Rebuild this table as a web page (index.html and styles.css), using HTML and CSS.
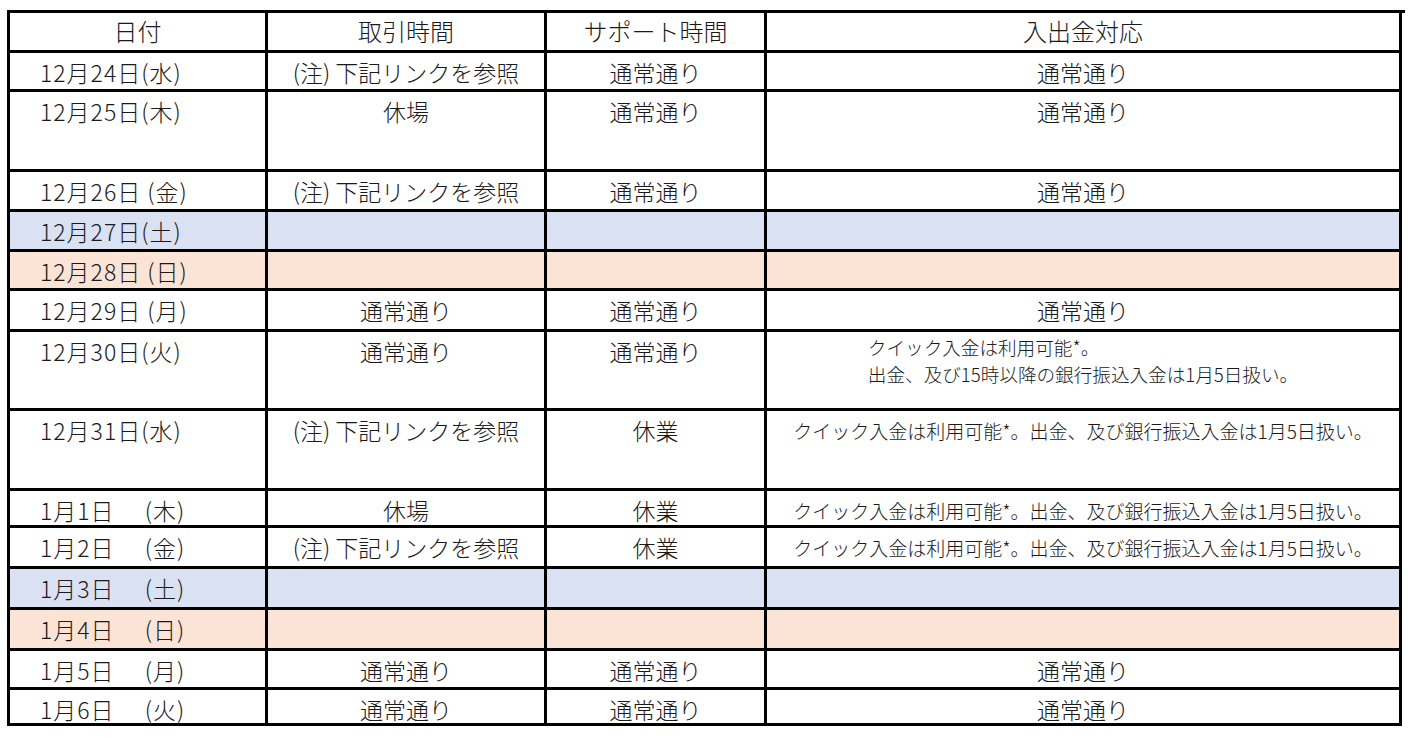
FILE: index.html
```html
<!DOCTYPE html>
<html lang="ja">
<head>
<meta charset="utf-8">
<title>年末年始の営業スケジュール</title>
<link rel="stylesheet" href="styles.css">
</head>
<body>
<div class="sheet">
  <div class="cell head">日付</div>
  <div class="cell head">取引時間</div>
  <div class="cell head">サポート時間</div>
  <div class="cell head">入出金対応</div>

  <div class="cell date">12月24日(水)</div>
  <div class="cell">(注) 下記リンクを参照</div>
  <div class="cell">通常通り</div>
  <div class="cell">通常通り</div>

  <div class="cell date">12月25日(木)</div>
  <div class="cell">休場</div>
  <div class="cell">通常通り</div>
  <div class="cell">通常通り</div>

  <div class="cell date">12月26日 (金)</div>
  <div class="cell">(注) 下記リンクを参照</div>
  <div class="cell">通常通り</div>
  <div class="cell">通常通り</div>

  <div class="cell date sat">12月27日(土)</div>
  <div class="cell sat"></div>
  <div class="cell sat"></div>
  <div class="cell sat"></div>

  <div class="cell date sun">12月28日 (日)</div>
  <div class="cell sun"></div>
  <div class="cell sun"></div>
  <div class="cell sun"></div>

  <div class="cell date">12月29日 (月)</div>
  <div class="cell">通常通り</div>
  <div class="cell">通常通り</div>
  <div class="cell">通常通り</div>

  <div class="cell date">12月30日(火)</div>
  <div class="cell">通常通り</div>
  <div class="cell">通常通り</div>
  <div class="cell note multi"><span class="block">クイック入金は利用可能*。<br>出金、及び15時以降の銀行振込入金は1月5日扱い。</span></div>

  <div class="cell date">12月31日(水)</div>
  <div class="cell">(注) 下記リンクを参照</div>
  <div class="cell">休業</div>
  <div class="cell note">クイック入金は利用可能*。出金、及び銀行振込入金は1月5日扱い。</div>

  <div class="cell date">1月1日　 (木)</div>
  <div class="cell">休場</div>
  <div class="cell">休業</div>
  <div class="cell note">クイック入金は利用可能*。出金、及び銀行振込入金は1月5日扱い。</div>

  <div class="cell date">1月2日　 (金)</div>
  <div class="cell">(注) 下記リンクを参照</div>
  <div class="cell">休業</div>
  <div class="cell note">クイック入金は利用可能*。出金、及び銀行振込入金は1月5日扱い。</div>

  <div class="cell date sat">1月3日　 (土)</div>
  <div class="cell sat"></div>
  <div class="cell sat"></div>
  <div class="cell sat"></div>

  <div class="cell date sun">1月4日　 (日)</div>
  <div class="cell sun"></div>
  <div class="cell sun"></div>
  <div class="cell sun"></div>

  <div class="cell date">1月5日　 (月)</div>
  <div class="cell">通常通り</div>
  <div class="cell">通常通り</div>
  <div class="cell">通常通り</div>

  <div class="cell date">1月6日　 (火)</div>
  <div class="cell">通常通り</div>
  <div class="cell">通常通り</div>
  <div class="cell">通常通り</div>
</div>
</body>
</html>
```

FILE: styles.css
```css
html, body {
  margin: 0;
  padding: 0;
  background: #ffffff;
}

body {
  font-family: "Noto Sans CJK JP", "Noto Sans", sans-serif;
  font-weight: 300;
  color: #1a1a1a;
}

.sheet {
  margin: 10px 0 0 7px;
  width: 1395px;
  display: grid;
  grid-template-columns: 258px 279px 220px 635px;
  grid-template-rows: 40px 39px 80px 40px 40px 39px 41px 79px 80px 37px 41px 41px 41px 39px 36px;
  border-left: 3px solid #000;
  border-top: 3px solid #000;
  background: #fff;
}

.cell {
  box-sizing: border-box;
  border-right: 3px solid #000;
  border-bottom: 3px solid #000;
  font-size: 23px;
  line-height: 34px;
  padding-top: 2px;
  text-align: center;
  white-space: nowrap;
  overflow: hidden;
}

.head {
  font-size: 24px;
  padding-top: 1px;
}

.date {
  text-align: left;
  padding-left: 30px;
  letter-spacing: 1px;
}

.sat {
  background: #d9e1f2;
}

.sun {
  background: #fbe4d6;
}

.note {
  font-size: 19px;
  line-height: 28px;
  padding-top: 6px;
}

.note.multi {
  font-size: 18.6px;
  line-height: 27px;
  padding-top: 1px;
}

.block {
  display: inline-block;
  text-align: left;
}
```
